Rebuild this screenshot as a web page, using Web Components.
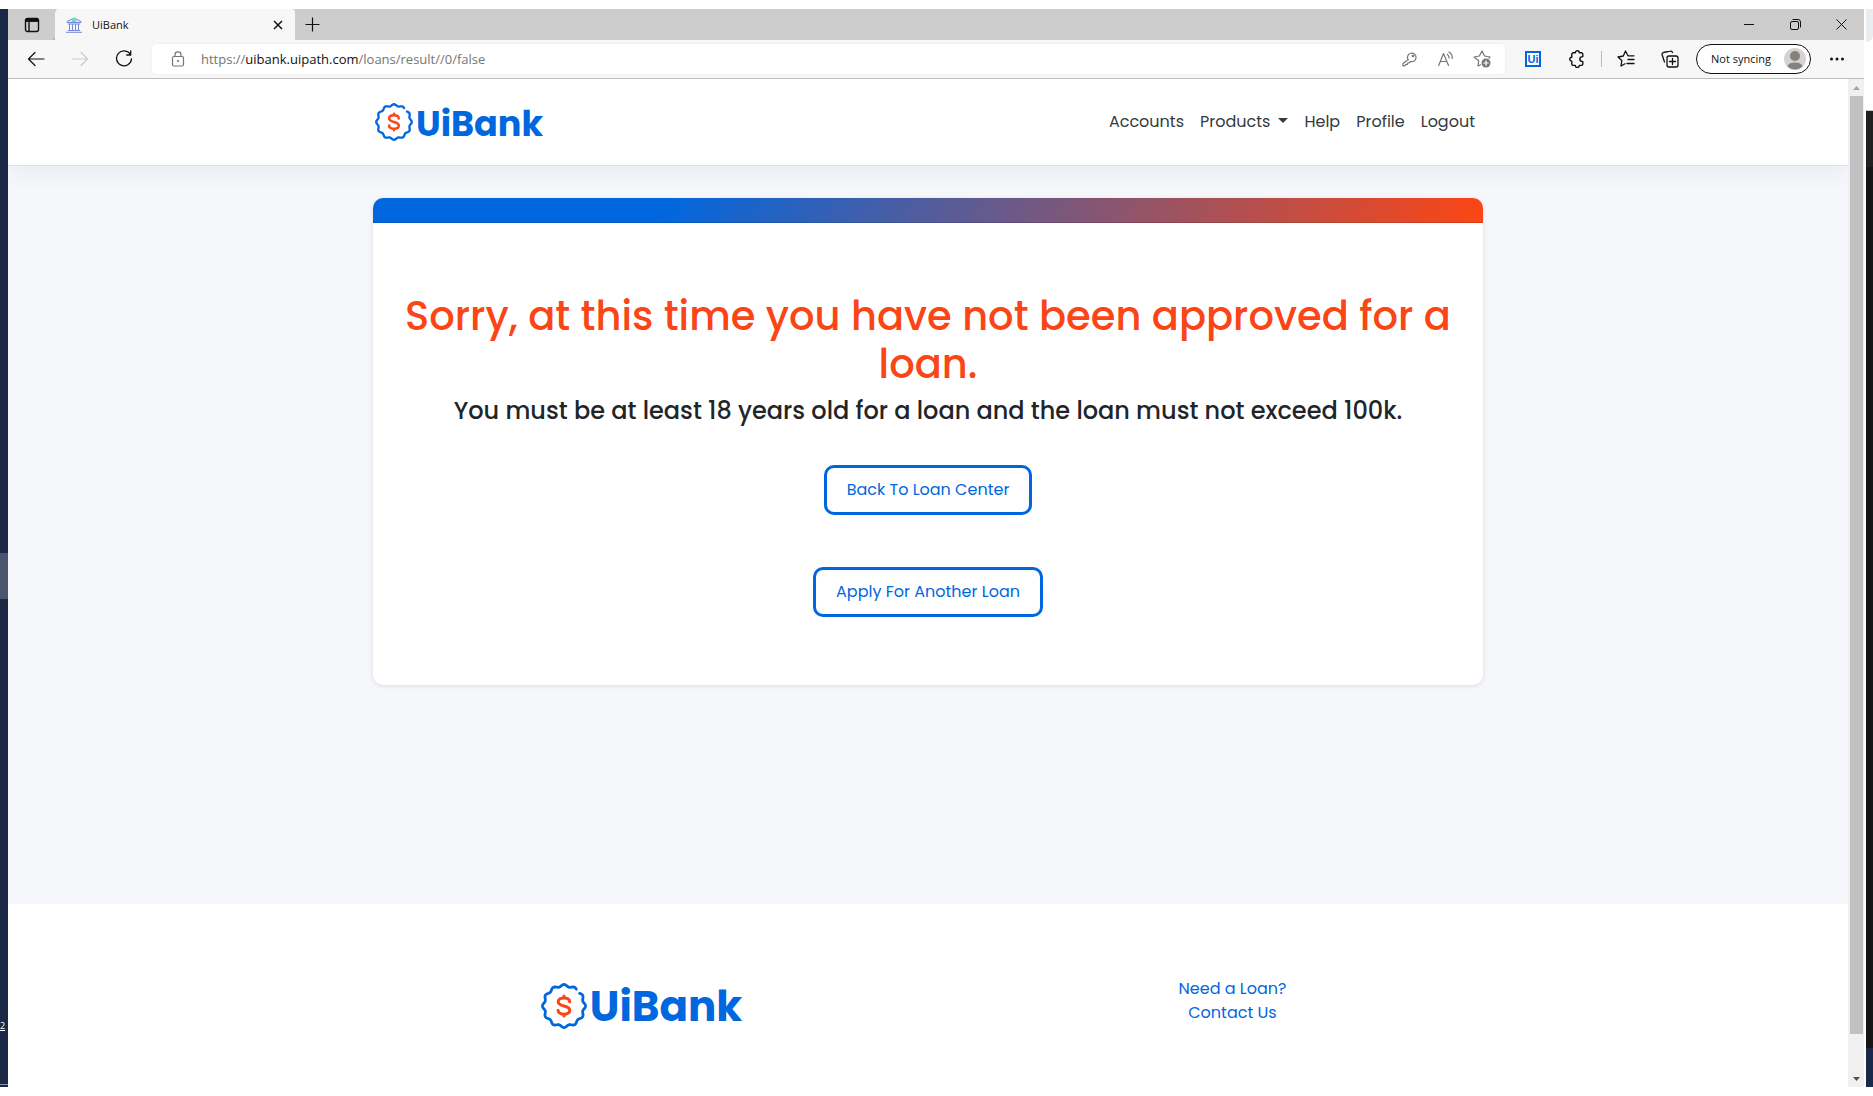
<!DOCTYPE html>
<html lang="en">
<head>
<meta charset="utf-8">
<title>UiBank</title>
<style>
html, body { margin: 0; height: 100%; background: #fff; }
body { font-family: Poppins, Inter, "Liberation Sans", sans-serif; }
</style>
</head>
<body>
<desk-top>
  <browser-window>
    <tab-strip slot="chrome">UiBank</tab-strip>
    <tool-bar slot="chrome"></tool-bar>
    <site-header></site-header>
    <site-main>
      <result-card>
        <span slot="title">Sorry, at this time you have not been approved for a loan.</span>
        <span slot="reason">You must be at least 18 years old for a loan and the loan must not exceed 100k.</span>
        <outline-button>Back To Loan Center</outline-button>
        <outline-button>Apply For Another Loan</outline-button>
      </result-card>
    </site-main>
    <site-footer></site-footer>
  </browser-window>
</desk-top>
<script>
const define = (name, html, setup) => customElements.define(name, class extends HTMLElement {
  constructor() {
    super();
    this.attachShadow({ mode: 'open' }).innerHTML = '<style>*{box-sizing:border-box}</style>' + html;
    if (setup) setup(this.shadowRoot);
  }
});

define('desk-top', `<style>
:host { display: grid; grid-template-columns: 8px 1fr 9px; min-height: 100vh; padding: 9px 0; box-sizing: border-box; }
.left { background: #1b2846; display: flex; flex-direction: column; }
.left i { flex: 546; } .left b { flex: 46; background: #4a546d; } .left div { flex: 486; display: flex; flex-direction: column; justify-content: flex-end; color: #fff; font: 9px/12px "Open Sans", sans-serif; border-bottom: 1px solid #8e95a4; margin-bottom: 2px; }
.left span { align-self: flex-start; margin-bottom: 52px; text-decoration: underline; }
.right { border-left: 2px solid #fff; display: flex; flex-direction: column; }
.right i { height: 33px; background: #e9edf0; border-bottom-right-radius: 7px; } .right u { height: 69px; border-bottom: 1px solid #ccc; } .right b { flex: 1; background: linear-gradient(#202020 56px, #161616 56px); } .right s { height: 39px; background: #1a2849; }
</style><div class="left"><i></i><b></b><div><span>2</span></div></div><slot></slot><div class="right"><i></i><u></u><b></b><s></s></div>`);

define('browser-window', `<style>
:host { display: flex; flex-direction: column; min-width: 0; }
.view { flex: 1; display: flex; min-height: 0; }
.page { flex: 1; display: flex; flex-direction: column; background: #f5f7fb; overflow: hidden; }
</style><slot name="chrome"></slot><div class="view"><div class="page"><slot></slot></div><scroll-track></scroll-track></div>`);

define('scroll-track', `<style>
:host { display: flex; flex-direction: column; width: 16px; background: #f0f0f0; }
svg { width: 16px; height: 17px; display: block; } i { flex: 1; background: #c1c1c1; margin: 0 1px 36px 2px; }
</style><svg><path d="M5 11h7L8.500 7z" fill="#a3a3a3"/></svg><i></i><svg><path d="M5 7h7L8.500 11z" fill="#505050"/></svg>`);

define('tab-strip', `<style>
:host { display: flex; height: 31px; background: #cdcdcd; font: 11px/30px "Open Sans", sans-serif; color: #111; }
button { border: 0; background: none; padding: 0; display: grid; place-items: center; height: 30px; }
svg { fill: none; stroke: #111; display: block; }
.act { width: 47px; height: 31px; border-radius: 0 0 4px 0; box-shadow: 1px 1px 1px #aaa; }
.tab { width: 240px; background: #f7f7f7; border-radius: 4px 4px 0 0; display: flex; align-items: center; padding-left: 11px; gap: 10px; }
.tab span { flex: 1; } .tab button { width: 34px; } .plus { width: 34px; } .fill { flex: 1; }
.win { width: 46px; }
</style><button class="act" aria-label="Tab actions"><svg width="16" height="16" stroke-width="1.400"><rect x="1.500" y="1.500" width="13" height="13" rx="2"/><path d="M1.500 4h13M5 5v9.500"/><path d="M2 3.200h12" stroke-width="3"/></svg></button>
<div class="tab"><svg width="16" height="16" style="stroke:#7688dd"><path d="M1 5.500V4.500L8 1l7 3.500v1z" fill="#dfe8fa"/><path d="M2 7h12M3.500 7v6M6.500 7v6M9.500 7v6M12.500 7v6M2 13.500h12M0 15.300h16"/><path d="M8 1v4" stroke="#65ddc8" stroke-width="4"/></svg><span><slot></slot></span><button aria-label="Close tab"><svg width="10" height="10" stroke-width="1.500"><path d="M1 1l8 8M9 1l-8 8"/></svg></button></div>
<button class="plus" aria-label="New tab"><svg width="15" height="15" stroke-width="1.200"><path d="M7.500 .500v14M.500 7.500h14"/></svg></button><div class="fill"></div>
<button class="win" aria-label="Minimize"><svg width="10" height="10"><path d="M0 5.500h10"/></svg></button>
<button class="win" aria-label="Restore"><svg width="11" height="11"><rect x=".500" y="2.500" width="8" height="8" rx="1.500"/><path d="M2.500 .500h5.500a2.500 2.500 0 0 1 2.500 2.500v5.500"/></svg></button>
<button class="win" aria-label="Close"><svg width="11" height="11"><path d="M.500 .500l10 10M10.500 .500l-10 10"/></svg></button>`);

define('tool-bar', `<style>
:host { display: flex; align-items: center; height: 39px; background: #f7f7f7; border-bottom: 1px solid #bcbcbc; padding: 0 5px 0 6px; font: 13px/30px "Open Sans", sans-serif; box-sizing: border-box; }
button { width: 44px; height: 30px; padding: 0; border: 0; background: none; display: grid; place-items: center; flex: none; }
svg { fill: none; stroke: #111; stroke-width: 1.200; stroke-linecap: round; stroke-linejoin: round; display: block; }
.addr { flex: 1; min-width: 0; height: 30px; margin-left: 6px; margin-right: 6px; background: #fff; border-radius: 4px; display: flex; align-items: center; padding: 0 5px 0 4px; box-shadow: 0 0 2px #e4e4e4; }
.url { flex: 1; color: #757575; outline: 0; white-space: nowrap; padding-left: 2px; } .url span { color: #111; }
.addr button { width: 36px; } .addr button:first-child { width: 43px; } .addr svg { stroke: #767676; }
hr { width: 1px; height: 16px; border: 0; margin: 0 2px; background: #bbb; }
.ui { width: 16px; height: 16px; background: #fff; border: 2px solid #0067df; color: #0067df; font: bold 11px/12px "Liberation Sans", sans-serif; text-align: center; }
button.pill { width: 115px; border: 1px solid #111; border-radius: 15px; background: #fff; margin: 0 4px; display: flex; align-items: center; justify-content: space-between; padding: 0 4px 0 14px; font: 11px/28px "Open Sans", sans-serif; color: #111; }
</style>
<button aria-label="Back"><svg width="18" height="16"><path d="M17 8H1.500M8 1.500L1.500 8L8 14.500"/></svg></button>
<button aria-label="Forward"><svg width="18" height="16" style="stroke:#ccc"><path d="M1 8h15.500M10 1.500L16.500 8L10 14.500"/></svg></button>
<button aria-label="Refresh"><svg width="18" height="18" style="stroke-width:1.300"><path d="M15.500 4.500A7.500 7.500 0 1 0 16.500 9M15.700 1v4h-4"/></svg></button>
<div class="addr"><button aria-label="Site information"><svg width="14" height="16"><rect x="1.500" y="5.500" width="11" height="9.500" rx="1.500"/><path d="M4 5.500V3.500a3 2.700 0 0 1 6 0v2"/><circle cx="7" cy="10" r=".5"/></svg></button>
<div class="url" role="textbox" contenteditable="true" spellcheck="false" aria-label="Address">https://<span>uibank.uipath.com</span>/loans/result//0/false</div>
<button aria-label="Passwords"><svg width="16" height="16"><path d="M6 8.500A4.300 4.300 0 1 1 8.500 10.500L7 12H5.500v1.500H4L2.500 15H1v-2.500L6.300 8.500"/><circle cx="11" cy="5" r=".7"/></svg></button>
<button aria-label="Read aloud"><svg width="16" height="16"><path d="M.700 14.500L5.500 2.500L10.500 14.500M2.500 10.500h6.300M9.500 3.500q1.700 1.500 1.500 3.500M11 1q3.800 2.500 3.200 6.500"/></svg></button>
<button aria-label="Add to favorites"><svg width="18" height="18"><path d="M5 16l.700-5.300L1 7l5.300-1L9 1l2.500 5L17 7l-1 1M5 16l2.500-1.300"/><circle cx="13" cy="13" r="4.500" fill="#767676" stroke="none"/><path d="M10.800 13h4.400M13 10.800v4.400" stroke="#fff"/></svg></button></div>
<button aria-label="UiPath extension"><span class="ui">Ui</span></button>
<button aria-label="Extensions"><svg width="16" height="18" style="stroke-width:1.400"><path d="M4 2.800H6.300a2 2 0 0 1 4 0h2a1.500 1.500 0 0 1 1.500 1.500v2.300c-4 0-4 5 0 5v2.300a1.500 1.500 0 0 1-1.500 1.500h-2a2 2 0 0 1-4 0H4.300a1.500 1.500 0 0 1-1.500-1.500v-2.700a2 2 0 0 1 0-4V4.300a1.500 1.500 0 0 1 1.500-1.500"/></svg></button><hr>
<button aria-label="Favorites"><svg width="18" height="18" style="stroke-width:1.300"><path d="M4 16l.800-5.500L1 7l5.300-1L8.500 1L11 5.800h6M4 16l4-2.200M11 9.500h6M10 13.500h7"/></svg></button>
<button aria-label="Collections"><svg width="18" height="18" style="stroke-width:1.300"><rect x="6" y="6" width="11" height="11" rx="2"/><path d="M11.500 8.500v6M8.500 11.500h6M3.500 12L1.200 5a2 2 0 0 1 1.300-2.500L9 1.200a2 2 0 0 1 2.500 1.300"/></svg></button>
<button class="pill">Not syncing<svg width="22" height="22" style="stroke:none"><circle cx="11" cy="11" r="11" fill="#d5d3d1"/><circle cx="11" cy="8" r="5" fill="#85817d"/><path d="M3.500 18.500q1-4 7.500-4t7.500 4a11 11 0 0 1-15 0" fill="#85817d"/></svg></button>
<button aria-label="Settings"><svg width="16" height="4" style="fill:#111;stroke:none"><circle cx="2.500" cy="2" r="1.500"/><circle cx="8" cy="2" r="1.500"/><circle cx="13.500" cy="2" r="1.500"/></svg></button>`);

define('uibank-logo', `<style>
:host { display: flex; align-items: center; gap: 3px; color: #0067df; font-size: var(--logo-size, 35px); font-weight: 700; line-height: 1; }
svg { width: var(--badge, 38px); height: var(--badge, 38px); fill: none; stroke-linecap: round; stroke-linejoin: round; }
span { padding-top: 2px; }
</style><svg viewBox="0 0 38 38"><path class="ring" stroke="#0067df" stroke-width="2.300"/><path d="M23.700 15.500c0-4.200-9.500-4.200-9.500 0c0 4.500 9.600 2.500 9.600 7c0 4.400-9.700 4.400-9.700 0M19 10.700v1.500M19 25.800v1.500" stroke="#fa4616" stroke-width="2.500"/></svg><span>UiBank</span>`, root => {
  // twelve-lobed seal, left open at the upper right
  const pts = [];
  for (let a = -39; a <= 306; a += 3) {
    const t = a * Math.PI / 180, r = 16.9 + 0.9 * Math.cos(12 * t);
    pts.push((19 + r * Math.cos(t)).toFixed(2) + ' ' + (19 + r * Math.sin(t)).toFixed(2));
  }
  root.querySelector('.ring').setAttribute('d', 'M' + pts.join('L'));
});

define('site-header', `<style>
:host { display: block; background: #fff; border-bottom: 1px solid #dee2e6; box-shadow: 0 8px 20px rgba(50,60,80,.06); }
div { max-width: 1110px; margin: auto; height: 86px; display: flex; align-items: center; justify-content: space-between; padding-left: 2px; }
nav { display: flex; } a { color: #343a40; text-decoration: none; font-size: 16px; line-height: 24px; padding: 0 8px; }
.drop::after { content: ""; display: inline-block; margin-left: 8px; vertical-align: 4px; border: 5px solid transparent; border-top-color: currentColor; border-bottom: 0; }
</style><div><uibank-logo></uibank-logo><nav><a href="#">Accounts</a><a href="#" class="drop">Products</a><a href="#">Help</a><a href="#">Profile</a><a href="#">Logout</a></nav></div>`);

define('site-main', `<style>:host { flex: 1; display: block; padding-top: 32px; } div { max-width: 1110px; margin: auto; }</style><div><slot></slot></div>`);

define('result-card', `<style>
:host { display: block; background: #fff; border-radius: 10px; box-shadow: 0 1px 4px rgba(0,0,0,.12); overflow: hidden; text-align: center; }
.bar { height: 25px; background: linear-gradient(116deg, #0067df 26%, #fa4616 99%); border-bottom: 1px solid rgba(0,0,0,.125); }
.body { padding: 69px 16px 68px; display: flex; flex-direction: column; align-items: center; }
h1 { margin: 0; color: #fa4616; font-size: 40px; line-height: 48px; font-weight: 500; }
h4 { margin: 8px 0 40px; color: #212529; font-size: 24px; line-height: 29px; font-weight: 500; }
.acts { display: flex; flex-direction: column; align-items: center; gap: 52px; }
</style><div class="bar"></div><div class="body"><h1><slot name="title"></slot></h1><h4><slot name="reason"></slot></h4><div class="acts"><slot></slot></div></div>`);

define('outline-button', `<style>
:host { display: block; }
button { height: 50px; border: 3px solid #0067df; border-radius: 10px; background: #fff; color: #0067df; font: inherit; font-size: 16px; padding: 0 20px 2px; display: block; }
</style><button><slot></slot></button>`);

define('site-footer', `<style>
:host { display: block; background: #fff; --logo-size: 42px; --badge: 46px; }
.row { max-width: 1110px; margin: auto; padding: 73px 0 58px 18px; display: grid; grid-template-columns: 1fr 1fr; column-gap: 90px; justify-items: center; }
uibank-logo { padding-top: 6px; }
a { display: block; text-align: center; color: #0067df; text-decoration: none; font-size: 16px; line-height: 24px; }
</style><div class="row"><uibank-logo></uibank-logo><div><a href="#">Need a Loan?</a><a href="#">Contact Us</a></div></div>`);
</script>
</body>
</html>
